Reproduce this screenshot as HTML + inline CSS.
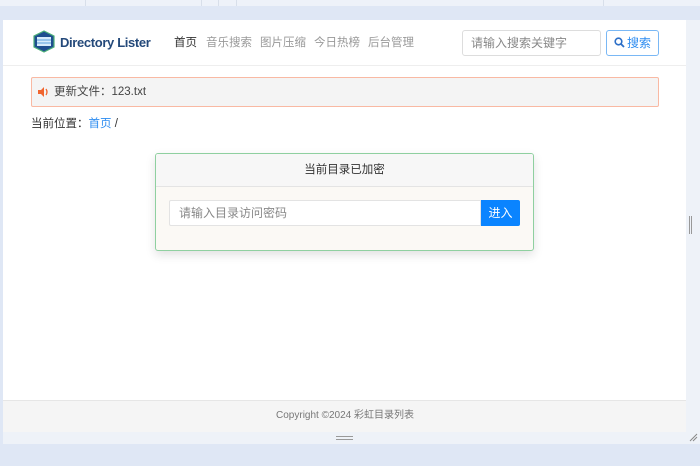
<!DOCTYPE html>
<html><head><meta charset="utf-8"><style>
*{margin:0;padding:0;box-sizing:border-box}
body{width:700px;height:466px;background:#dfe7f5;font-family:"Liberation Sans","Noto Sans CJK SC",sans-serif;position:relative;overflow:hidden;font-size:12px;color:#333}
.abs{position:absolute}
.nav{position:absolute;top:35px;font-size:11.5px;line-height:17px;color:#999;white-space:nowrap}
</style></head><body>
<div class="abs" style="left:0;top:0;width:700px;height:6px;background:#eef2f9"></div>
<div class="abs" style="left:85px;top:0;width:1px;height:6px;background:#d8dfea"></div>
<div class="abs" style="left:201px;top:0;width:1px;height:6px;background:#d8dfea"></div>
<div class="abs" style="left:218px;top:0;width:1px;height:6px;background:#d8dfea"></div>
<div class="abs" style="left:236px;top:0;width:1px;height:6px;background:#d8dfea"></div>
<div class="abs" style="left:603px;top:0;width:1px;height:6px;background:#d8dfea"></div>
<div class="abs" style="left:3px;top:20px;width:683px;height:380px;background:#fff"></div>
<div class="abs" style="left:686px;top:20px;width:14px;height:424px;background:#eef2f8"></div>
<div class="abs" style="left:689px;top:216px;width:3px;height:18px;border-left:1px solid #999;border-right:1px solid #999"></div>
<div class="abs" style="left:3px;top:400px;width:683px;height:32px;background:#f5f5f5;border-top:1px solid #e6e6e6"></div>
<div class="abs" style="left:3px;top:432px;width:683px;height:12px;background:#eef2f8"></div>
<div class="abs" style="left:336px;top:436px;width:17px;height:4px;border-top:1px solid #999;border-bottom:1px solid #999"></div>
<div class="abs" style="left:0;top:400px;width:700px;text-align:center;line-height:32px;font-size:10px;color:#777"><span style="margin-left:-10px">Copyright ©2024 彩虹目录列表</span></div>
<svg class="abs" style="left:688px;top:432px" width="10" height="10"><path d="M2 9L9 2M5 9L9 5" stroke="#888" stroke-width="1"/></svg>
<div class="abs" style="left:3px;top:65px;width:683px;height:1px;background:#eee"></div>
<svg class="abs" style="left:32px;top:30px" width="24" height="23" viewBox="0 0 24 23"><polygon points="12,1 22,6 22,17 12,22 2,17 2,6" fill="#1f4f8f" stroke="#4caf78" stroke-width="1.2"/><rect x="5" y="7" width="14" height="9" fill="#d8ecfb"/><path d="M5 10h14M5 13h14" stroke="#5aa0dc"/></svg>
<div class="abs" style="left:60px;top:34px;font-size:13px;font-weight:bold;color:#24497a;line-height:18px;letter-spacing:-0.35px">Directory Lister</div>
<div class="nav" style="left:174px;color:#333">首页</div>
<div class="nav" style="left:206px">音乐搜索</div>
<div class="nav" style="left:260px">图片压缩</div>
<div class="nav" style="left:314px">今日热榜</div>
<div class="nav" style="left:368px">后台管理</div>
<div class="abs" style="left:462px;top:30px;width:139px;height:26px;border:1px solid #ddd;border-radius:3px;font-size:12px;color:#888;padding:6px 8px;line-height:13px">请输入搜索关键字</div>
<div class="abs" style="left:606px;top:30px;width:53px;height:26px;border:1px solid #7ab8f5;border-radius:3px;font-size:12px;color:#2d8cf0;line-height:24px;text-align:center"><svg width="11" height="11" style="vertical-align:-1px;margin-right:2px"><circle cx="4.5" cy="4.5" r="3.3" fill="none" stroke="#2d6fc7" stroke-width="1.6"/><path d="M7 7l3 3" stroke="#2d6fc7" stroke-width="1.8"/></svg>搜索</div>
<div class="abs" style="left:31px;top:77px;width:628px;height:30px;border:1px solid #f9b9a3;background:#f4f4f4;border-radius:2px"></div>
<svg class="abs" style="left:38px;top:87px" width="11" height="10"><path d="M0 3h3l3-3v10l-3-3H0z" fill="#f0652f"/><path d="M8 2q2 3 0 6" stroke="#f0652f" fill="none" stroke-width="1.3"/></svg>
<div class="abs" style="left:54px;top:85px;font-size:11.5px;color:#444;line-height:15px">更新文件：123.txt</div>
<div class="abs" style="left:31px;top:117px;font-size:11.5px;color:#333;line-height:15px">当前位置：<span style="color:#2d8cf0">首页</span> /</div>
<div class="abs" style="left:155px;top:153px;width:379px;height:98px;border:1px solid #8fd0a0;border-radius:3px;background:#fbf9f5;box-shadow:0 4px 10px rgba(0,0,0,0.12);overflow:hidden">
<div style="height:33px;background:#f7f7f7;border-bottom:1px solid #e4e4e4;text-align:center;line-height:33px;font-size:11.5px;color:#333">当前目录已加密</div>
<div class="abs" style="left:13px;top:46px;width:312px;height:26px;border:1px solid #e3e3e3;background:#fff;border-radius:2px 0 0 2px;font-size:12px;color:#888;padding-left:9px;line-height:24px">请输入目录访问密码</div>
<div class="abs" style="left:325px;top:46px;width:39px;height:26px;background:#0a84ff;color:#fff;font-size:12px;line-height:26px;text-align:center;border-radius:0 2px 2px 0">进入</div>
</div>
</body></html>
